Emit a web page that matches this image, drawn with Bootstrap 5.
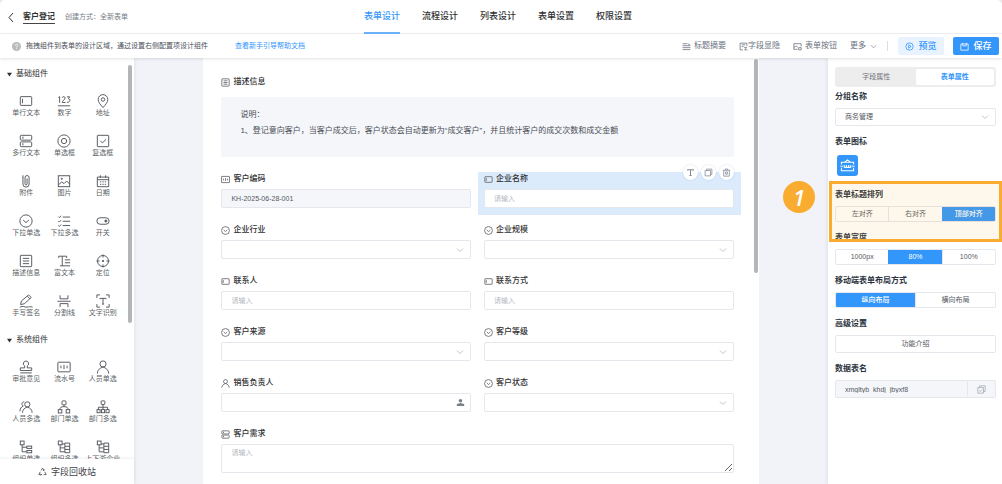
<!DOCTYPE html>
<html lang="zh-CN">
<head>
<meta charset="utf-8">
<meta name="viewport" content="width=device-width, initial-scale=1">
<title>客户登记</title>
<link href="https://cdn.jsdelivr.net/npm/bootstrap@5.3.0/dist/css/bootstrap.min.css" rel="stylesheet">
<style>
:root{--blue:#3296fa;--line:#e5e7ed;--ink:#303133;--soft:#f4f6fa;--orange:#f9ac2f}
body{font-family:"Liberation Sans","Noto Sans CJK SC",sans-serif;font-size:8px;line-height:12px;color:var(--ink);background:#e9eaec}
a{text-decoration:none;color:inherit}
.ico{width:9px;height:9px;fill:none;stroke:currentColor;stroke-width:1.4;flex:none;display:block}
.topbar{height:34px;display:grid;grid-template-columns:1fr auto 1fr;border-bottom:1px solid #f2f2f4;border-radius:5px 5px 0 0}
.crumbs{gap:6px}
.page-name{font-size:8px;font-weight:700;border-bottom:1px solid #444;margin-right:4px}
.sub-note{font-size:7px;color:#777c85}
.main-tabs{gap:22px;font-size:9px;margin-right:6px}
.main-tabs a{line-height:33px;font-weight:500;border-bottom:2px solid transparent;height:34px}
.main-tabs a.active{color:var(--blue);border-color:#6cb3fb}
.toolbar{height:24px;box-shadow:0 1px 3px rgba(0,0,0,.12);z-index:3}
.tip{font-size:7px;color:#4a4f5a;padding-left:12px;gap:5px}
.tip a{color:var(--blue);margin-left:22px}
.tools{gap:13px}
.tool{border:0;background:none;padding:0;color:#6b7280;font-size:8px;line-height:12px;gap:3px}
.tool .chev{width:7px;height:7px}
.acts{gap:9px;margin-right:3px}
.rule{width:1px;height:10px;background:#dcdfe6;margin:0 10px}
.act{border:0;border-radius:2px;width:46px;height:18px;padding:0;font-size:9px;font-weight:500;line-height:12px}
.act-preview{background:#e8f3ff;color:var(--blue)}
.act-save{background:var(--blue);color:#fff}
.work{background:#f1f3f8}
.palette{width:134px;box-shadow:1px 0 4px rgba(0,0,0,.06)}
.palette-list{padding-top:10px;min-height:0}
.group-head{font-size:8px;padding:0 0 14px 7px;line-height:12px}
.group-head button{display:flex;align-items:center;gap:4px;height:12px;border:0;background:none;padding:0;color:inherit}
.group-head .ico{width:5px;height:5px;fill:currentColor;stroke:none}
.parts{display:grid;grid-template-columns:repeat(3,1fr);padding:0 12px 0 7px}
.part{border:0;background:none;padding:0;height:40px;font-size:7px;line-height:10px;color:#5c5f66;white-space:nowrap}
.part .ico{width:14px;height:14px;margin:0 auto;stroke-width:1.1;color:#55585f}
.bin{height:25px;border:0;box-shadow:0 -1px 3px rgba(0,0,0,.07);font-size:9px;color:#3f4349}
.thumb{position:absolute;width:4px;border-radius:2px;background:#b3b5b9}
.sheet{width:80%;padding:18px 25px 0 18px}
.fname{height:12px;font-size:8px;font-weight:500;gap:3px;margin-bottom:4px;color:#303133}
.fname label{line-height:12px}
.fname .ico{color:#5a5d63}
.descr{background:var(--soft);border-radius:2px;padding:10px 19px 18px;line-height:16px;color:#4a4d54;margin:9px 0 16px}
.fields{--bs-gutter-x:13px;--bs-gutter-y:0}
.fbox{position:relative;margin-bottom:16px}
.box,.box:focus{display:block;width:100%;height:19px;min-height:0;border:1px solid var(--line);border-radius:2px;padding:0 9px;font-size:7px;line-height:16px;background-color:#fff;color:#55585f}
.box::placeholder{color:#b4b8c0}
select.box{background-image:url("data:image/svg+xml,%3Csvg xmlns='http://www.w3.org/2000/svg' viewBox='0 0 8 8' fill='none' stroke='%23c0c4cc'%3E%3Cpath d='M1 2.5l3 3 3-3'/%3E%3C/svg%3E");background-repeat:no-repeat;background-position:right 6px center;background-size:8px;appearance:none}
.box.locked{background-color:var(--soft)}
textarea.box{height:29px;line-height:14px;padding-top:1px}
.person{position:absolute;right:6px;bottom:5px;color:#7c8088}
.picked::before{content:"";position:absolute;inset:-1px -7px -7px -6px;background:#dcebfc}
.picked>*{position:relative}
.picked .mini{position:absolute;top:-8px;right:0;gap:3px}
.mini button{width:15px;height:15px;border:0;border-radius:50%;background:#fff;padding:0;color:#858a94;box-shadow:0 0 2px rgba(50,100,170,.25)}
.props{width:174px;padding:9px 6px 0 7px;box-shadow:-1px 0 4px rgba(0,0,0,.08);z-index:1}
.switcher{height:20px;background:#ededee;border-radius:3px;padding:2px;margin-bottom:4px}
.switcher button{border:0;background:none;border-radius:2px;padding:0;font-size:7px;color:#70747c}
.switcher button.active{background:#fff;color:var(--blue);font-weight:700}
.prop{margin-bottom:10px}
.prop h2,.prop h2 label{font-size:8px;line-height:12px;font-weight:700;margin:0 0 5px;color:#2c3440;display:block}
.prop h2 label{margin:0}
.prop .box{height:18px}
.seg{height:16px;border:1px solid var(--line);border-radius:2px;overflow:hidden}
.seg button{border:0;background:none;flex:1 1 0;padding:0;font-size:7px;line-height:14px;color:#55585f}
.seg button+button{border-left:1px solid var(--line)}
.seg button.active{background:var(--blue);color:#fff;font-weight:500;border-color:var(--blue)}
.form-ico{width:21px;height:21px;margin:7px 0 13px 2px;border:0;border-radius:3px;background:var(--blue);color:#fff;padding:0}
.form-ico .ico{width:15px;height:15px;margin:auto;stroke-width:1.1}
.callout{position:absolute;inset:-8px -6px -20px -6px;border:3px solid var(--orange);background:rgba(249,172,47,.09);pointer-events:none}
.step{position:absolute;left:-52px;top:-8px;width:32px;height:32px;border-radius:50%;background:var(--orange);color:#fff;font:italic 600 22px/32px "Open Sans",sans-serif;text-align:center}
.copy{width:28px;height:18px;border:1px solid var(--line);border-left:0;border-radius:0 2px 2px 0;background:var(--soft);padding:0;color:#a6aab2}
</style>
</head>
<body class="vh-100 overflow-hidden d-flex flex-column">
<svg class="d-none">
<symbol id="text" viewBox="0 0 16 16"><rect x="1.500" y="3" width="13" height="10" rx=".8"/><path d="M4 5.500v5"/></symbol>
<symbol id="num" viewBox="0 0 16 16"><path d="M1.500 4L3 3v7M6 4.200C6 2.600 9.300 2.600 9.300 4.600 9.300 6 6 8 6 9.700h3.700M11.500 3.200h3L13 5.500c3 0 2 4.800-1.700 3.900M1 13.500h14"/></symbol>
<symbol id="pin" viewBox="0 0 16 16"><path d="M8 15.500C5 12 2.500 9.500 2.500 6.200a5.500 5.500 0 0 1 11 0C13.500 9.500 11 12 8 15.500z"/><circle cx="8" cy="6.300" r="2"/></symbol>
<symbol id="multi" viewBox="0 0 16 16"><rect x="1.500" y="1.500" width="13" height="5.500" rx="1"/><rect x="1.500" y="9" width="13" height="5.500" rx="1"/><path d="M4.500 3v2.500M4.500 10.500V13"/></symbol>
<symbol id="radio" viewBox="0 0 16 16"><circle cx="8" cy="8" r="7"/><circle cx="8" cy="8" r="3"/></symbol>
<symbol id="check" viewBox="0 0 16 16"><rect x="1.500" y="1.500" width="13" height="13" rx=".6"/><path d="M5 7.800l2.300 2.400L11.500 6"/></symbol>
<symbol id="clip" viewBox="0 0 16 16"><path d="M4.500 3.500v8a3.500 3.500 0 0 0 7 0V3.500a2.400 2.400 0 0 0-4.600 0v7.800a1.100 1.100 0 0 0 2.300 0V5M4.500 4V1.500"/></symbol>
<symbol id="pic" viewBox="0 0 16 16"><rect x="1.500" y="2" width="13" height="12.500"/><path d="M1.500 12.500l4-3.500 2.500 2 3-3 3.500 3.500"/><circle cx="5.500" cy="5.500" r=".7"/></symbol>
<symbol id="date" viewBox="0 0 16 16"><path d="M1.500 3.500h13v11h-13zM1.500 6.500h13M5 1.500v3M11 1.500v3M4.500 9H6M7.300 9h1.500M10 9h1.500M4.500 11.800H6M7.300 11.800h1.500M10 11.800h1.500"/></symbol>
<symbol id="drop" viewBox="0 0 16 16"><circle cx="8" cy="8" r="7"/><path d="M4.800 7l3.200 2.800L11.200 7"/></symbol>
<symbol id="dropm" viewBox="0 0 16 16"><path d="M1.500 3l1.200 1.200L4.700 2M1.500 8l1.200 1.200L4.700 7M1.500 13l1.200 1.200L4.700 12M6.500 3.500H15M6.500 8.300H15M6.500 13.200H15"/></symbol>
<symbol id="toggle" viewBox="0 0 16 16"><rect x="1" y="4.300" width="14" height="7.400" rx="3.700"/><circle cx="11.300" cy="8" r="1.200" fill="currentColor"/></symbol>
<symbol id="info" viewBox="0 0 16 16"><rect x="1.500" y="1.500" width="13" height="13" rx=".8"/><path d="M4.500 5h7M4.500 8h7M4.500 11h7"/></symbol>
<symbol id="rich" viewBox="0 0 16 16"><path d="M2 4.500V2.500h9v2M6 2.500v11M3.500 13.500H15M9 10H15M9 6.700H15"/></symbol>
<symbol id="target" viewBox="0 0 16 16"><circle cx="8" cy="8" r="6.300"/><path d="M8 .5V4M8 12v3.500M.5 8H4M12 8h3.500"/><circle cx="8" cy="8" r=".8" fill="currentColor"/></symbol>
<symbol id="pen" viewBox="0 0 16 16"><path d="M1.800 12l1-4L11 1l3 3L6 11.200 1.800 12zM9.500 2.500l3 3M1 15c4-2 5 .3 8 0s3-1 6.500 0"/></symbol>
<symbol id="split" viewBox="0 0 16 16"><path d="M.5 8.300h15M3.500 1.500v4h9v-4M3.500 15v-4h9v4"/></symbol>
<symbol id="ocr" viewBox="0 0 16 16"><path d="M1 4.500V1h3.500M11.500 1H15v3.500M15 11.500V15h-3.500M4.500 15H1v-3.500M4.500 6V5h7v1M8 5v6.500M6.800 11.500h2.400"/></symbol>
<symbol id="stamp" viewBox="0 0 16 16"><path d="M1.500 12V9h5V6.800a3 3 0 1 1 3 0V9h5v3zM1.500 14.700h13"/></symbol>
<symbol id="serial" viewBox="0 0 16 16"><rect x="1" y="2.500" width="14" height="11" rx=".6"/><path d="M4.500 6.500v3M8 5.500v5M11.500 6.500v3"/></symbol>
<symbol id="user" viewBox="0 0 16 16"><circle cx="8" cy="4.500" r="3.500"/><path d="M1.500 15.500C1.500 11.500 4 9.500 8 8c4 1.500 6.500 3.500 6.500 7.500"/></symbol>
<symbol id="users" viewBox="0 0 16 16"><circle cx="9.500" cy="5" r="3"/><path d="M4 14.500c0-3.500 2.300-5.300 5.500-6.500 3.200 1.200 5.500 3 5.500 6.500M6 2C3 2 2.500 5.500 4.800 7 2.500 8 1.200 9.500 1 13"/></symbol>
<symbol id="dept" viewBox="0 0 16 16"><rect x="5.700" y="1" width="4.600" height="4.600" rx="1"/><path d="M8 5.600v2M3.300 11C3.300 8.500 5 7.600 8 7.600s4.700.9 4.700 3.400"/><rect x="1.500" y="11" width="4" height="3.800"/><rect x="10.500" y="11" width="4" height="3.800"/></symbol>
<symbol id="depts" viewBox="0 0 16 16"><rect x="5.900" y="1" width="4.200" height="4.200" rx=".6"/><path d="M8 5.200V11M2.800 11V8.300h10.400V11"/><rect x="1.200" y="11" width="3.500" height="3.500"/><rect x="6.300" y="11" width="3.500" height="3.500"/><rect x="11.400" y="11" width="3.500" height="3.500"/></symbol>
<symbol id="tree" viewBox="0 0 16 16"><rect x="1.500" y="1.200" width="4.300" height="4.300"/><path d="M3.600 5.500v8H9M3.600 8.300H9"/><rect x="9" y="7" width="5.500" height="2.600"/><rect x="9" y="12" width="5.500" height="2.600"/></symbol>
<symbol id="trees" viewBox="0 0 16 16"><rect x="1.500" y="1.200" width="4.300" height="4.300"/><path d="M3.600 5.500v8H9M3.600 9H9M5.800 4.500H9"/><path d="M9 3.500h5.500v11H9zM9 7.200h5.500M9 10.800h5.500"/></symbol>
<symbol id="recycle" viewBox="0 0 16 16"><path d="M5.500 6L8 2l2.500 4M12 8.500l2.500 5H10M6.500 13.500h-5L4 8.500M8.800 6h2V4M5 12l1.500 1.500L5 15"/></symbol>
<symbol id="copy" viewBox="0 0 16 16"><path d="M2 4.500h9.500V14H2zM4.500 4.500V2H14v9.500h-2.500"/></symbol>
<symbol id="copyc" viewBox="0 0 16 16"><path d="M1.500 4.500h10v10h-10zM4.500 4.500v-3h10v10h-3M4 9.500l2 2 3-3.500"/></symbol>
<symbol id="trash" viewBox="0 0 16 16"><path d="M1.500 4h13M3 4v10.500h10V4M6 4V1.800h4V4M6.300 7v4h3.400V7z"/></symbol>
<symbol id="tee" viewBox="0 0 16 16"><path d="M3 5V3h10v2M8 3v10.500M6 13.500h4" stroke-width="1.800"/></symbol>
<symbol id="head" viewBox="0 0 16 16"><g fill="currentColor" stroke="none"><circle cx="8" cy="5" r="3.200"/><path d="M1.500 10.500L8 9l6.500 1.500V14h-13z"/></g></symbol>
<symbol id="lines" viewBox="0 0 16 16"><path d="M1 3h8M1 6.500h14M1 10h14M1 13.500h14M10 3l4 2"/></symbol>
<symbol id="hide" viewBox="0 0 16 16"><path d="M7 14H2V2h12v5M5 5h6M5 8h3M9 9.500h4.500L10 14h5"/></symbol>
<symbol id="btnico" viewBox="0 0 16 16"><path d="M8 13H1.500V3h13v5M1.500 10l4-3 3 2M10 10h4.500v4H10z"/></symbol>
<symbol id="play" viewBox="0 0 16 16"><circle cx="8" cy="8" r="6.500"/><path d="M6.500 5l4.500 3-4.500 3z"/></symbol>
<symbol id="save" viewBox="0 0 16 16"><path d="M1.500 3.500h13v11h-13zM5 1.500V7h6V1.500"/></symbol>
<symbol id="crate" viewBox="0 0 16 16"><path d="M1.500 7V4.500h13V7M1.500 10.500V13.500h13v-3M5 4.500L8 2l3 2.500M.5 8.800h2.500M13 8.800h2.500M4.500 7.500V10M6.800 7.500V10M9.200 7.500V10M11.500 7.500V10M4.500 10h7"/></symbol>
<symbol id="down" viewBox="0 0 16 16"><path d="M2 5l6 6 6-6"/></symbol>
<symbol id="caret" viewBox="0 0 10 10"><path d="M0 1.500h10L5 9z"/></symbol>
</svg>

<header class="topbar bg-white">
  <div class="crumbs d-flex align-items-center ps-2">
    <a href="#" aria-label="返回"><svg class="ico" viewBox="0 0 9 9"><path d="M5 0L1 4.500l4 4.500" stroke-width="1"/></svg></a>
    <span class="page-name">客户登记</span><span class="sub-note">创建方式：全新表单</span>
  </div>
  <nav class="main-tabs d-flex">
    <a href="#" class="active">表单设计</a><a href="#">流程设计</a><a href="#">列表设计</a><a href="#">表单设置</a><a href="#">权限设置</a>
  </nav>
</header>
<div class="toolbar bg-white d-flex align-items-center justify-content-between flex-shrink-0">
  <div class="tip d-flex align-items-center">
    <svg class="ico" style="color:#b9bbbe" viewBox="0 0 9 9"><circle cx="4.500" cy="4.500" r="4.500" fill="currentColor" stroke="none"/><path d="M3.200 3.500c0-1.700 2.600-1.500 2.600 0 0 1-1.300.9-1.300 2M4.500 6.300v.9" stroke="#fff" stroke-width=".8"/></svg>
    <span>拖拽组件到表单的设计区域，通过设置右侧配置项设计组件</span>
    <a href="#">查看新手引导帮助文档</a>
  </div>
  <div class="d-flex align-items-center">
    <div class="tools d-flex align-items-center">
      <button class="tool d-flex align-items-center"><svg class="ico"><use href="#lines"/></svg>标题摘要</button>
      <button class="tool gap-0 d-flex align-items-center"><svg class="ico"><use href="#hide"/></svg>字段显隐</button>
      <button class="tool d-flex align-items-center"><svg class="ico"><use href="#btnico"/></svg>表单按钮</button>
      <button class="tool gap-1 d-flex align-items-center">更多<svg class="ico chev"><use href="#down"/></svg></button>
    </div>
    <span class="rule"></span>
    <div class="acts d-flex">
      <button class="act act-preview d-flex align-items-center justify-content-center gap-1"><svg class="ico"><use href="#play"/></svg>预览</button>
      <button class="act act-save d-flex align-items-center justify-content-center gap-1"><svg class="ico"><use href="#save"/></svg>保存</button>
    </div>
  </div>
</div>

<div class="work d-flex flex-grow-1 overflow-hidden">
  <aside class="palette bg-white d-flex flex-column flex-shrink-0 position-relative">
    <div class="palette-list flex-grow-1 overflow-hidden">
      <div class="group-head"><button><svg class="ico"><use href="#caret"/></svg>基础组件</button></div>
      <div class="parts" id="basic"></div>
      <div class="group-head"><button><svg class="ico"><use href="#caret"/></svg>系统组件</button></div>
      <div class="parts" id="system"></div>
    </div>
    <button class="bin bg-white d-flex align-items-center justify-content-center gap-1 flex-shrink-0"><svg class="ico"><use href="#recycle"/></svg>字段回收站</button>
    <span class="thumb" style="right:2px;top:7px;height:258px"></span>
  </aside>

  <main class="flex-grow-1 d-flex justify-content-center">
    <div class="sheet bg-white position-relative overflow-hidden">
      <div class="fname d-flex align-items-center"><svg class="ico"><use href="#info"/></svg>描述信息</div>
      <div class="descr"><div>说明：</div><div>1、登记意向客户，当客户成交后，客户状态会自动更新为“成交客户”，并且统计客户的成交次数和成交金额</div></div>
      <form class="row fields">
        <div class="col-6"><div class="fbox"><div class="fname d-flex align-items-center"><svg class="ico"><use href="#serial"/></svg><label for="f1">客户编码</label></div><input id="f1" class="box locked" value="KH-2025-06-28-001" readonly></div></div>
        <div class="col-6"><div class="fbox picked"><div class="fname d-flex align-items-center"><svg class="ico"><use href="#text"/></svg><label for="f2">企业名称</label></div><input id="f2" class="box" placeholder="请输入">
          <div class="mini d-flex"><button type="button" aria-label="标题"><svg class="ico m-auto"><use href="#tee"/></svg></button><button type="button" aria-label="复制"><svg class="ico m-auto"><use href="#copy"/></svg></button><button type="button" aria-label="删除"><svg class="ico m-auto"><use href="#trash"/></svg></button></div></div></div>
        <div class="col-6"><div class="fbox"><div class="fname d-flex align-items-center"><svg class="ico"><use href="#drop"/></svg><label for="f3">企业行业</label></div><select id="f3" class="box"></select></div></div>
        <div class="col-6"><div class="fbox"><div class="fname d-flex align-items-center"><svg class="ico"><use href="#drop"/></svg><label for="f4">企业规模</label></div><select id="f4" class="box"></select></div></div>
        <div class="col-6"><div class="fbox"><div class="fname d-flex align-items-center"><svg class="ico"><use href="#text"/></svg><label for="f5">联系人</label></div><input id="f5" class="box" placeholder="请输入"></div></div>
        <div class="col-6"><div class="fbox"><div class="fname d-flex align-items-center"><svg class="ico"><use href="#text"/></svg><label for="f6">联系方式</label></div><input id="f6" class="box" placeholder="请输入"></div></div>
        <div class="col-6"><div class="fbox"><div class="fname d-flex align-items-center"><svg class="ico"><use href="#drop"/></svg><label for="f7">客户来源</label></div><select id="f7" class="box"></select></div></div>
        <div class="col-6"><div class="fbox"><div class="fname d-flex align-items-center"><svg class="ico"><use href="#drop"/></svg><label for="f8">客户等级</label></div><select id="f8" class="box"></select></div></div>
        <div class="col-6"><div class="fbox"><div class="fname d-flex align-items-center"><svg class="ico"><use href="#user"/></svg><label for="f9">销售负责人</label></div><input id="f9" class="box"><svg class="ico person"><use href="#head"/></svg></div></div>
        <div class="col-6"><div class="fbox"><div class="fname d-flex align-items-center"><svg class="ico"><use href="#drop"/></svg><label for="f10">客户状态</label></div><select id="f10" class="box"></select></div></div>
        <div class="col-12"><div class="fbox"><div class="fname d-flex align-items-center"><svg class="ico"><use href="#multi"/></svg><label for="f11">客户需求</label></div><textarea id="f11" class="box" placeholder="请输入"></textarea></div></div>
      </form>
      <span class="thumb" style="right:1px;top:1px;height:214px"></span>
    </div>
  </main>

  <aside class="props bg-white flex-shrink-0">
    <div class="switcher d-flex"><button class="w-50">字段属性</button><button class="w-50 active">表单属性</button></div>
    <section class="prop"><h2><label for="g1">分组名称</label></h2><select id="g1" class="box"><option>商务管理</option></select></section>
    <section><div class="prop mb-0"><h2>表单图标</h2></div><button class="form-ico d-flex" aria-label="表单图标"><svg class="ico"><use href="#crate"/></svg></button></section>
    <section class="prop position-relative"><h2>表单标题排列</h2>
      <div class="seg d-flex"><button>左对齐</button><button>右对齐</button><button class="active">顶部对齐</button></div>
      <span class="callout"></span><span class="step">1</span></section>
    <section class="prop"><h2>表单宽度</h2><div class="seg d-flex"><button>1000px</button><button class="active">80%</button><button>100%</button></div></section>
    <section class="prop"><h2>移动端表单布局方式</h2><div class="seg d-flex"><button class="active">纵向布局</button><button>横向布局</button></div></section>
    <section class="prop"><h2>高级设置</h2><button class="box text-center">功能介绍</button></section>
    <section class="prop"><h2><label for="g2">数据表名</label></h2><div class="d-flex"><input id="g2" class="box locked rounded-end-0" value="xmgltyb_khdj_jbyxf8" readonly><button class="copy flex-shrink-0" aria-label="复制"><svg class="ico m-auto"><use href="#copyc"/></svg></button></div></section>
  </aside>
</div>
<script src="https://cdn.jsdelivr.net/npm/bootstrap@5.3.0/dist/js/bootstrap.bundle.min.js"></script>
<script>
const fill=(id,list)=>document.getElementById(id).innerHTML=list.map(([i,t])=>`<button class="part d-flex flex-column"><svg class="ico"><use href="#${i}"/></svg><span class="mx-auto">${t}</span></button>`).join('');
fill('basic',[['text','单行文本'],['num','数字'],['pin','地址'],['multi','多行文本'],['radio','单选框'],['check','复选框'],['clip','附件'],['pic','图片'],['date','日期'],['drop','下拉单选'],['dropm','下拉多选'],['toggle','开关'],['info','描述信息'],['rich','富文本'],['target','定位'],['pen','手写签名'],['split','分割线'],['ocr','文字识别']]);
fill('system',[['stamp','审批意见'],['serial','流水号'],['user','人员单选'],['users','人员多选'],['dept','部门单选'],['depts','部门多选'],['tree','组织单选'],['trees','组织多选'],['trees','上下游企业']]);
</script>
</body>
</html>
